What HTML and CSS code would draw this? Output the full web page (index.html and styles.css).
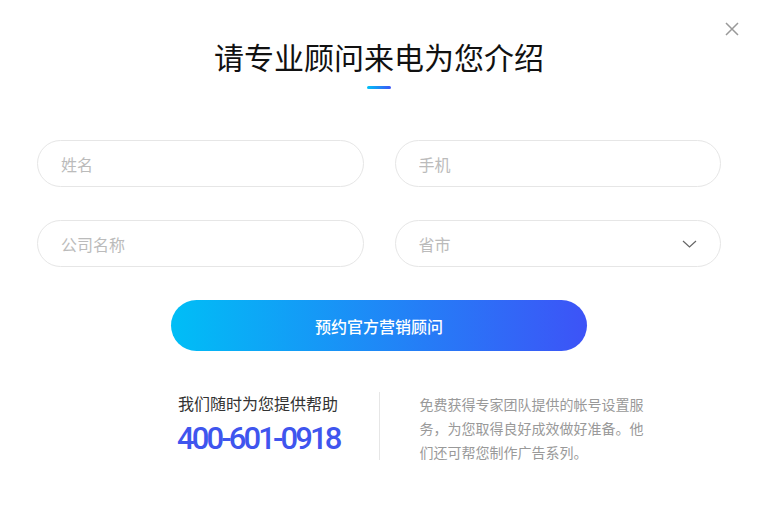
FILE: index.html
```html
<!DOCTYPE html>
<html>
  <head>
    <meta charset="utf-8" />
    <title>预约顾问</title>
    <link rel="stylesheet" href="styles.css">
  </head>

  <body>
    <div class="dialog">
      <!-- 关闭按钮 -->
      <span class="close">
        <svg width="14" height="14" viewBox="0 0 14 14">
          <path d="M1 1L13 13M13 1L1 13" stroke="#999" stroke-width="1.5" fill="none" />
        </svg>
      </span>

      <h2 class="title">请专业顾问来电为您介绍</h2>
      <div class="title-bar"></div>

      <!-- 表单 -->
      <div class="form">
        <input class="field" type="text" placeholder="姓名" />
        <input class="field" type="text" placeholder="手机" />
        <input class="field" type="text" placeholder="公司名称" />
        <div class="field select">
          <span>省市</span>
          <svg width="15" height="8" viewBox="0 0 15 8">
            <path d="M1 1L7.5 7L14 1" stroke="#666" stroke-width="1.2" fill="none" />
          </svg>
        </div>
      </div>

      <button class="submit">预约官方营销顾问</button>

      <!-- 联系方式 -->
      <div class="contact">
        <div class="contact-left">
          <div>
            <p class="help">我们随时为您提供帮助</p>
            <p class="phone">400-601-0918</p>
          </div>
        </div>
        <div class="divider"></div>
        <p class="contact-right">免费获得专家团队提供的帐号设置服务，为您取得良好成效做好准备。他们还可帮您制作广告系列。</p>
      </div>
    </div>
  </body>
</html>
```

FILE: styles.css
```css
/* 基础样式 */
html,
body {
  margin: 0;
  padding: 0;
  background: #fff;
  font-family: "Noto Sans CJK SC", "Noto Sans", sans-serif;
}

.dialog {
  position: relative;
  width: 758px;
  padding-top: 41px;
  display: flex;
  flex-direction: column;
  align-items: center;
}

/* 关闭按钮 */
.close {
  position: absolute;
  top: 22px;
  right: 19px;
  width: 14px;
  height: 14px;
  cursor: pointer;
}
.close svg {
  display: block;
}

/* 标题 */
.title {
  margin: 0;
  font-size: 30px;
  line-height: 30px;
  font-weight: 400;
  color: #111;
}

.title-bar {
  margin-top: 15px;
  width: 24px;
  height: 3px;
  border-radius: 2px;
  background: linear-gradient(to right, #00c2f6, #3d55f6);
}

/* 表单 */
.form {
  margin-top: 51px;
  width: 684px;
  display: grid;
  grid-template-columns: 1fr 1fr;
  column-gap: 31px;
  row-gap: 33px;
}

.field {
  box-sizing: border-box;
  height: 47px;
  padding: 0 23px;
  border: 1px solid #e6e6e6;
  border-radius: 24px;
  font-family: inherit;
  font-size: 16px;
  color: #333;
  outline: none;
  background: #fff;
}
.field::placeholder {
  color: #bbb;
}

.select {
  display: flex;
  align-items: center;
  justify-content: space-between;
  color: #bbb;
}

/* 提交按钮 */
.submit {
  margin-top: 33px;
  width: 416px;
  height: 51px;
  border: none;
  border-radius: 26px;
  background: linear-gradient(to right, #00bef6, #3d53f7);
  color: #fff;
  font-family: inherit;
  font-size: 16px;
  font-weight: 500;
  cursor: pointer;
}

/* 联系方式 */
.contact {
  margin-top: 41px;
  width: 758px;
  display: grid;
  grid-template-columns: 1fr 1px 1fr;
}

.contact-left {
  display: flex;
  justify-content: flex-end;
  padding-right: 39px;
}

.help {
  margin: 0;
  font-size: 16px;
  line-height: 22px;
  color: #333;
}

.phone {
  margin: 7px 0 0 -1px;
  font-family: Roboto, sans-serif;
  font-size: 31px;
  line-height: 36px;
  font-weight: 500;
  letter-spacing: -2.9px;
  color: #3f55ee;
}

.divider {
  height: 68px;
  background: #e6e6e6;
}

.contact-right {
  margin: 0 0 0 40px;
  width: 226px;
  font-size: 14px;
  line-height: 24px;
  color: #999;
}
```
